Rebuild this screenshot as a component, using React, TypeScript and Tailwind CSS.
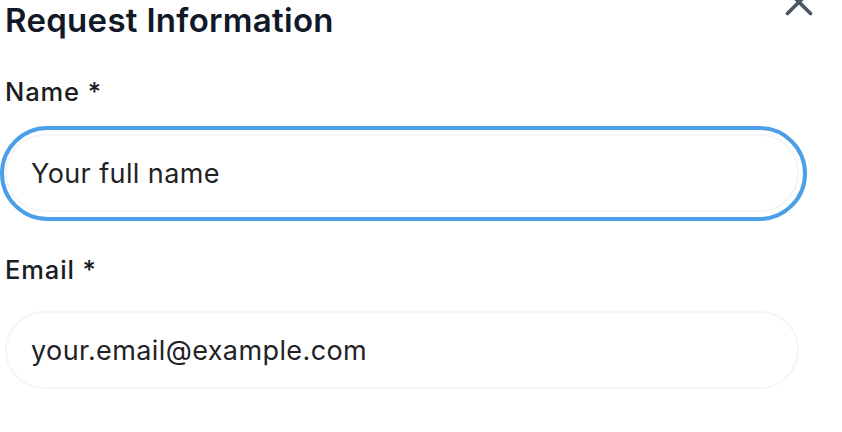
import { X } from "lucide-react";

export default function App() {
    return (
        <div
            className="relative w-[842px] h-[432px] overflow-hidden bg-white"
            style={{ fontFamily: "Inter, 'Noto Sans', sans-serif" }}>
            <button className="absolute left-[776px] top-[-21px] text-[#4b5563]">
                <X size={46} strokeWidth={1.9} />
            </button>
            <div className="ml-[5px] w-[794px] flex flex-col">
                <h2 className="text-[33px] leading-[40px] font-semibold text-[#111827] tracking-[0.3px]">
                    Request Information
                </h2>
                <label className="mt-[36px] text-[25.5px] leading-[32px] font-[450] text-[#1a1d21] tracking-[0.9px]">
                    Name *
                </label>
                <div className="-ml-[5px] mt-[18px] w-[807px] rounded-full border-[4px] border-[#4a9fe8] pl-[1px] pr-[4px] pt-[4px] pb-[5px]">
                    <input
                        className="w-full h-[78px] rounded-full border-2 border-[#f4f5f6] pl-[24px] text-[27px] tracking-[0.4px] text-[#1f2226] placeholder:text-[#1f2226] outline-none"
                        placeholder="Your full name"
                    />
                </div>
                <label className="mt-[33px] text-[25.5px] leading-[32px] font-[450] text-[#1a1d21] tracking-[0.9px]">
                    Email *
                </label>
                <input
                    className="mt-[25px] w-full h-[78px] rounded-full border-2 border-[#f4f5f6] pl-[24px] text-[27px] tracking-[0.4px] text-[#1f2226] placeholder:text-[#1f2226] outline-none"
                    placeholder="your.email@example.com"
                />
            </div>
        </div>
    );
}
